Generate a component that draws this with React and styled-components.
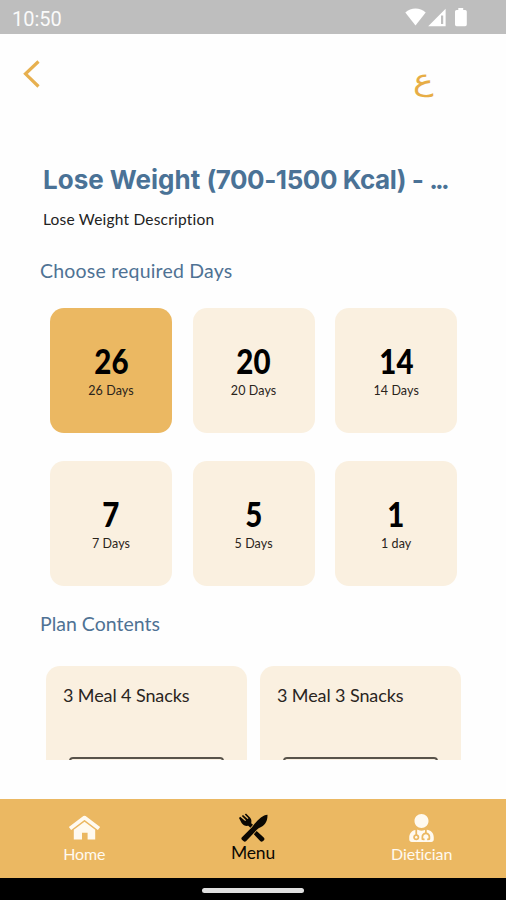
import React from 'react';
import styled, { createGlobalStyle } from 'styled-components';
import { FaUserMd } from 'react-icons/fa';

const days = [
    { count: '26', label: '26 Days' },
    { count: '20', label: '20 Days' },
    { count: '14', label: '14 Days' },
    { count: '7', label: '7 Days' },
    { count: '5', label: '5 Days' },
    { count: '1', label: '1 day' },
];

const plans = ['3 Meal 4 Snacks', '3 Meal 3 Snacks'];

function HomeIcon() {
    return (
        <svg width="32" height="26" viewBox="0 0 32 26">
            <path d="M2 13.6 L16.5 2.6 L31 13.6" fill="none" stroke="currentColor" strokeWidth="3.8" strokeLinejoin="round" strokeLinecap="butt" />
            <path d="M5.8 14.8 L16.5 6.8 L27.2 14.8 V24.5 H19.6 V17.8 H14 V24.5 H5.8 Z" fill="currentColor" />
        </svg>
    )
}

function CutleryIcon() {
    return (
        <svg width="30" height="28" viewBox="0 0 30 28" fill="currentColor">
            {/* knife */}
            <path d="M29.5 0.8 C25 1.2 21 4.6 16 10.6 L14.2 13 L4.2 23 a1.9 1.9 0 0 0 0 2.9 L5.4 27 a1.9 1.9 0 0 0 2.8 0 L18.8 15.8 L20.6 14.2 C26.5 11.6 29.6 8 29.5 0.8 Z" />
            {/* fork */}
            <path d="M1 3.9 L2.2 2.8 L7.2 7.1 L8 6.3 L3.8 2 L5 0.9 L9.6 5 L10.5 4.2 L6.8 0.4 L8 -0.4 L12.2 3.8 C13.9 5.6 13.4 8 13.2 9.2 L15 10.8 L12.4 13.7 L10.3 11.8 C7.8 12.3 5.2 11.4 3.6 9 Z" />
            <path d="M18.7 17.1 L25.7 23.6 a1.9 1.9 0 0 1 0 2.8 L25 27 a1.9 1.9 0 0 1 -2.8 0 L15.8 20.2 Z" />
        </svg>
    )
}

function App() {
    return (
        <Screen>
            <GlobalStyle />
            <StatusBar>
                <Clock>10:50</Clock>
                <svg width="64" height="20" viewBox="0 0 64 20" fill="#fff">
                    <path d="M0.3 4.5 C6 -0.9 15 -0.9 20.7 4.5 L10.5 17.6 Z" />
                    <path d="M23.2 18.2 L40.6 0.8 V18.2 Z" />
                    <path d="M36 7.5 H38.2 V16 H36 Z" fill="#bebebe" />
                    <path d="M53.3 0 H58.2 V2 H60.2 Q61.8 2 61.8 3.6 V16.6 Q61.8 18.2 60.2 18.2 H51.6 Q50 18.2 50 16.6 V3.6 Q50 2 51.6 2 H53.3 Z" />
                </svg>
            </StatusBar>
            <Header>
                <svg width="18" height="30" viewBox="0 0 18 30">
                    <path d="M15.5 2.5 L2.5 14.8 L15.5 27.5" fill="none" stroke="#e7b04f" strokeWidth="3.2" />
                </svg>
                <Language>ع</Language>
            </Header>
            <Content>
                <Title>Lose Weight <Range>(700-1500 Kcal) - </Range><Dots>...</Dots></Title>
                <Description>Lose Weight Description</Description>
                <SectionTitle $spacing="0.2px">Choose required Days</SectionTitle>
                <DayGrid>
                    {days.map((day, i) => (
                        <DayCard key={day.count} $active={i === 0}>
                            <Count>{day.count}</Count>
                            <DayLabel>{day.label}</DayLabel>
                        </DayCard>
                    ))}
                </DayGrid>
                <SectionTitle $spacing="0px">Plan Contents</SectionTitle>
                <PlanRow>
                    {plans.map((plan) => (
                        <PlanCard key={plan}>
                            <PlanName>{plan}</PlanName>
                            <PlanBox />
                        </PlanCard>
                    ))}
                </PlanRow>
            </Content>
            <NavBar>
                <NavItem>
                    <HomeIcon />
                    <NavLabel>Home</NavLabel>
                </NavItem>
                <NavItem $active>
                    <CutleryIcon />
                    <NavLabel $active>Menu</NavLabel>
                </NavItem>
                <NavItem>
                    <FaUserMd size={27} />
                    <NavLabel>Dietician</NavLabel>
                </NavItem>
            </NavBar>
            <GestureBar>
                <Pill />
            </GestureBar>
        </Screen>
    )
}

const GlobalStyle = createGlobalStyle`
    *{
        box-sizing: border-box;
        margin: 0;
        padding: 0;
    }
    body{
        background: #fefefe;
        font-family: 'Lato', 'Open Sans', sans-serif;
        overflow: hidden;
    }
    svg{
        display: block;
        overflow: visible;
    }
`;

const Screen = styled.div`
    display: flex;
    flex-direction: column;
    width: 506px;
    height: 900px;
    overflow: hidden;
`;

const StatusBar = styled.div`
    display: flex;
    justify-content: space-between;
    flex: 0 0 34px;
    padding: 8px 37px 0 12px;
    background: #bebebe;
`;

const Clock = styled.span`
    font: 400 20px/22px 'Roboto', sans-serif;
    color: #fafafa;
`;

const Header = styled.header`
    display: flex;
    justify-content: space-between;
    flex: 0 0 130px;
    padding: 25px 72px 0 23px;
`;

const Language = styled.span`
    height: 40px;
    font-family: 'DejaVu Sans', sans-serif;
    font-size: 30px;
    font-weight: 200;
    line-height: 42px;
    transform: scaleX(1.15);
    transform-origin: right;
    color: #e7ad45;
`;

const Content = styled.main`
    flex: 0 0 596px;
    padding: 0 40px;
    overflow: hidden;
`;

const Title = styled.h1`
    padding-left: 3px;
    font-family: 'Inter', sans-serif;
    font-size: 26px;
    font-weight: 700;
    line-height: 32px;
    white-space: nowrap;
    color: #4a7296;
`;

const Range = styled.span`
    letter-spacing: -0.45px;
`;

const Dots = styled.span`
    letter-spacing: -2.8px;
`;

const Description = styled.p`
    padding: 13px 0 0 3px;
    font-size: 15.5px;
    line-height: 20px;
    letter-spacing: 0.2px;
    color: #222;
`;

const SectionTitle = styled.h2`
    height: 79px;
    padding-top: 29px;
    font-size: 19.5px;
    font-weight: 400;
    line-height: 26px;
    letter-spacing: ${({ $spacing }) => $spacing};
    color: #4f7294;
`;

const DayGrid = styled.div`
    display: grid;
    grid-template-columns: repeat(3, 122px);
    grid-auto-rows: 125px;
    gap: 28px 20.6px;
    padding-left: 10px;
    margin-bottom: -4px;
`;

const DayCard = styled.div`
    display: flex;
    flex-direction: column;
    align-items: center;
    padding-top: 36px;
    border-radius: 14px;
    background: ${({ $active }) => ($active ? '#ebb862' : '#faf0e0')};
`;

const Count = styled.strong`
    font-size: 33.5px;
    font-weight: 900;
    line-height: 34px;
    transform: scaleX(0.88);
    color: #000;
`;

const DayLabel = styled.span`
    font-size: 12.5px;
    line-height: 26px;
    letter-spacing: 0.1px;
    color: #2a241b;
`;

const PlanRow = styled.div`
    display: grid;
    grid-template-columns: 201px 201px;
    gap: 13px;
    padding: 5px 0 0 6px;
`;

const PlanCard = styled.div`
    height: 190px;
    padding: 17px 23px 0;
    border-radius: 14px;
    background: #faf0e0;
`;

const PlanName = styled.p`
    margin-left: -6px;
    font-size: 18px;
    line-height: 24px;
    letter-spacing: -0.1px;
    white-space: nowrap;
    color: #2a251e;
`;

const PlanBox = styled.div`
    height: 60px;
    margin-top: 50px;
    border: 2px solid #58534a;
    border-radius: 4px;
`;

const NavBar = styled.nav`
    display: grid;
    grid-template-columns: repeat(3, 1fr);
    flex: 0 0 79px;
    margin-top: 39px;
    background: #ebb862;
`;

const NavItem = styled.div`
    display: flex;
    flex-direction: column;
    align-items: center;
    padding-top: 15px;
    color: ${({ $active }) => ($active ? '#0b0803' : '#fffaf0')};

    svg{
        height: 28px;
    }
`;

const NavLabel = styled.span`
    font-size: ${({ $active }) => ($active ? '17.5px' : '16px')};
    line-height: ${({ $active }) => ($active ? '22px' : '24px')};
    letter-spacing: ${({ $active }) => ($active ? '-0.2px' : '-0.1px')};
`;

const GestureBar = styled.div`
    display: flex;
    justify-content: center;
    flex: 0 0 22px;
    padding-top: 10px;
    background: #000;
`;

const Pill = styled.div`
    width: 102px;
    height: 5px;
    border-radius: 3px;
    background: #e0e0e0;
`;

export default App
